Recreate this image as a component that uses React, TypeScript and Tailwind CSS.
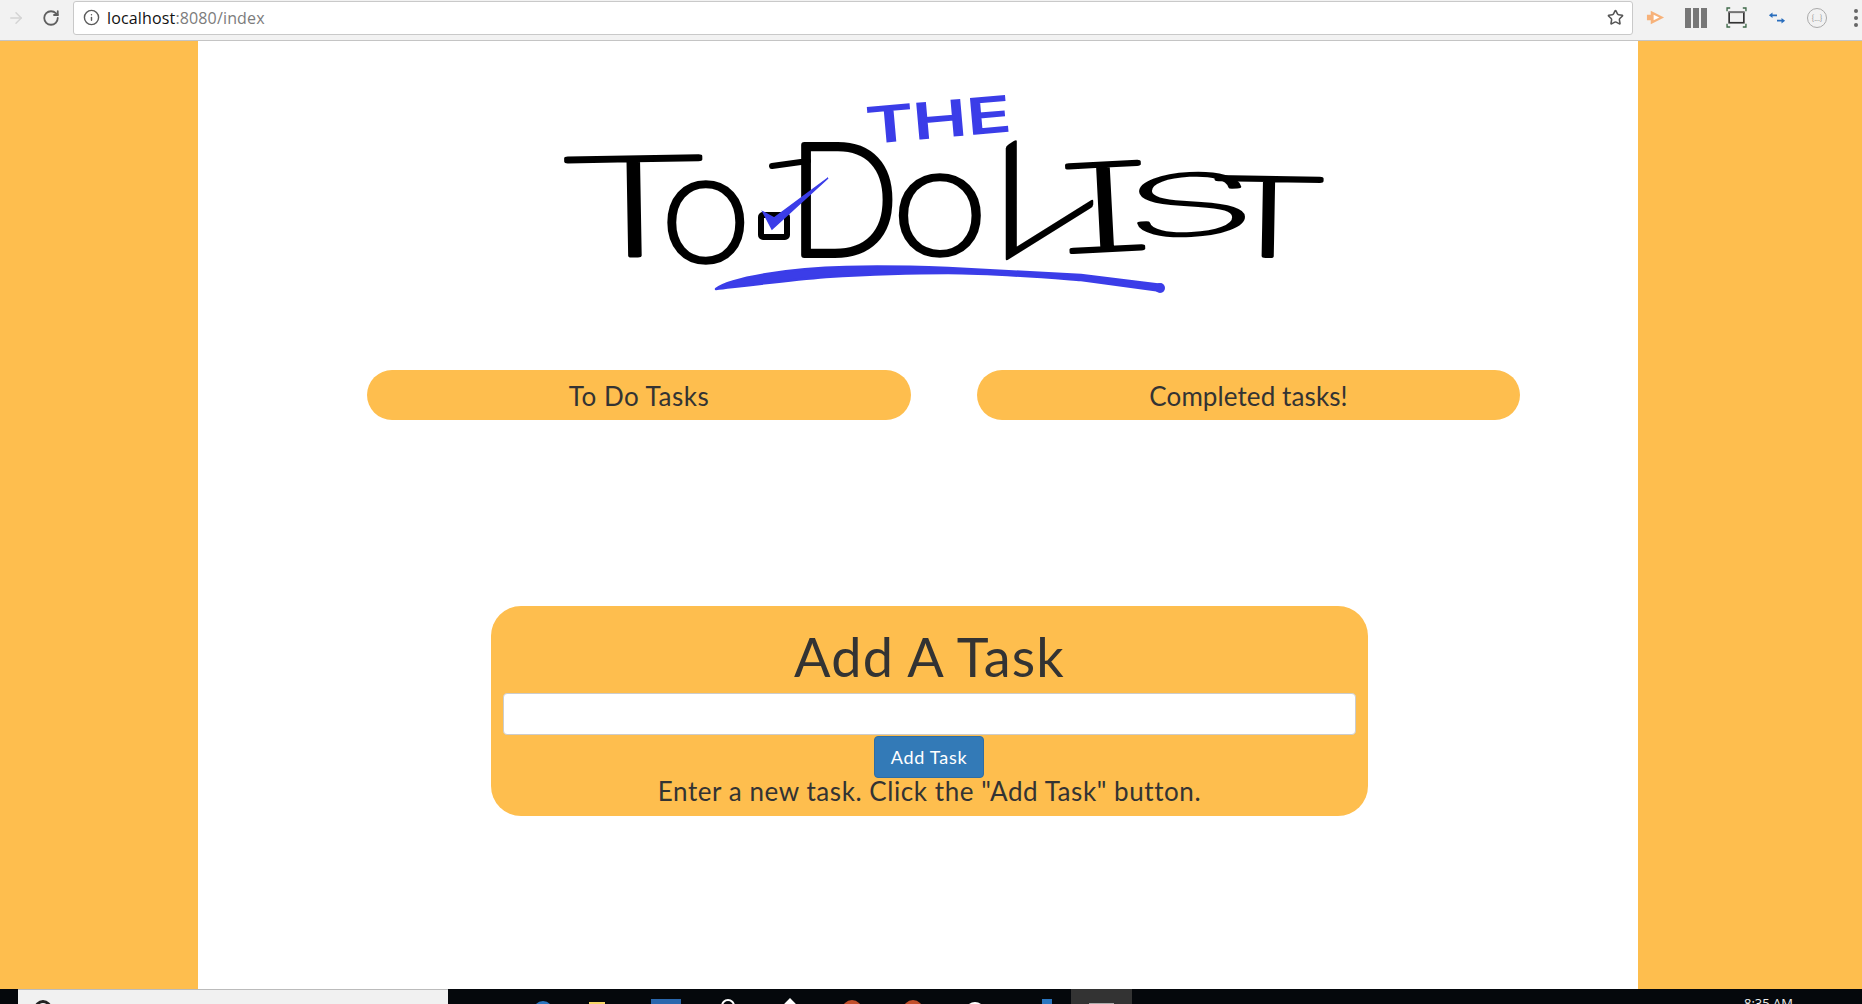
// To Do List landing page inside a browser window
import { ArrowRight, Info, RotateCw, Star } from "lucide-react";

const logoLetters = [
  { ch: "T", x: 13, y: 177, tf: "rotate(-1) scale(1.97 1)", size: 135 },
  { ch: "O", x: 122, y: 181, tf: "scale(1.02 0.92)", size: 115 },
  { ch: "D", x: 246, y: 175, tf: "scale(1.15 1.08)", size: 140 },
  { ch: "O", x: 353, y: 174, tf: "scale(1.09 0.92)", size: 115 },
  { ch: "L", x: 445, y: 192, tf: "skewY(-32) scale(1.45 1.05)", size: 145 },
  { ch: "I", x: 518, y: 173, tf: "rotate(-3) scale(2.2 1)", size: 120 },
  { ch: "S", x: 585, y: 158, tf: "rotate(-3) scale(2.3 0.87)", size: 95 },
  { ch: "T", x: 664, y: 175, tf: "rotate(1) scale(1.88 0.98)", size: 110 },
];

function Logo() {
  return (
    <svg viewBox="0 0 800 240" className="w-[800px] h-[240px] ml-[342px] block" role="img" aria-label="The To Do List">
      <g fill="#000" stroke="#000" strokeWidth="6" strokeLinejoin="round" fontFamily="Inter, sans-serif" fontWeight="100">
        {logoLetters.map((l, i) => (
          <text
            key={i}
            fontSize={l.size}
            vectorEffect="non-scaling-stroke"
            className="[font-feature-settings:'cv08']"
            transform={`translate(${l.x} ${l.y}) ${l.tf}`}
          >
            {l.ch}
          </text>
        ))}
      </g>
      <path d="M232 86 L268 81 M265 67 L266 175" fill="none" stroke="#000" strokeWidth="6" strokeLinecap="round" />
      <text
        fill="#3b3de8"
        stroke="#3b3de8"
        strokeWidth="2"
        fontFamily="Inter, sans-serif"
        fontWeight="400"
        fontSize="48"
        transform="translate(328 63) rotate(-5) scale(1.51 1)"
      >
        THE
      </text>
      <rect x="221" y="135" width="26" height="22" rx="2" fill="none" stroke="#000" strokeWidth="6" />
      <path d="M223 132 L232 149 L288 98 L234 138 Z" fill="#3b3de8" stroke="#3b3de8" strokeWidth="1.5" />
      <path
        d="M176 209 C190 198 250 188 306 187 C340 186 380 187 408 188 L541 195 L622 205 L622 211 L541 200 C500 197 450 193 408 193 C360 193 320 195 286 197 C250 200 210 205 176 209 Z"
        fill="#3b3de8"
        stroke="#3b3de8"
        strokeWidth="2.5"
        strokeLinejoin="round"
      />
      <circle cx="620" cy="208" r="5" fill="#3b3de8" />
    </svg>
  );
}

function BrowserBar() {
  return (
    <div className="h-[41px] shrink-0 bg-[#f2f2f2] border-b border-[#c4c4c4] flex items-center pb-[6px] pt-[1px]">
      <ArrowRight className="ml-[7px] w-[18px] h-[18px] text-[#d4d4d4]" strokeWidth={2} />
      <RotateCw className="ml-[17px] w-[18px] h-[18px] text-[#5f5f5f]" strokeWidth={2.4} />
      <div className="ml-[13px] w-[1560px] h-[34px] bg-white border border-[#c9c9c9] rounded-[3px] flex items-center">
        <Info className="ml-[9px] w-[17px] h-[17px] text-[#5a5a5a]" strokeWidth={2} />
        <div className="ml-[7px] text-[16px] font-['Open_Sans',sans-serif] tracking-[0.15px] text-[#111]">
          localhost<span className="text-[#7c7c7c]">:8080/index</span>
        </div>
        <Star className="ml-auto mr-[8px] w-[17px] h-[17px] text-[#555]" strokeWidth={2.2} />
      </div>
      <svg viewBox="0 0 20 20" className="ml-[13px] w-[19px] h-[19px]">
        <path d="M1 7h4V3l14 7-14 7v-4H1z" fill="#f7b27a" />
        <path d="M8 7l6 3-6 3z" fill="#fff" />
      </svg>
      <div className="ml-[20px] flex gap-[2px]">
        <div className="w-[6px] h-[20px] bg-[#777]" />
        <div className="w-[6px] h-[20px] bg-[#777]" />
        <div className="w-[6px] h-[20px] bg-[#777]" />
      </div>
      <svg viewBox="0 0 20 20" className="ml-[19px] w-[21px] h-[21px]">
        <path d="M1 4V1h3M16 1h3v3M1 16v3h3M16 19h3v-3" fill="none" stroke="#3f6a4a" strokeWidth="1.3" />
        <rect x="3" y="5" width="14" height="10" fill="none" stroke="#333" strokeWidth="1.6" />
        <path d="M3 5h14" stroke="#888" strokeWidth="1" />
      </svg>
      <svg viewBox="0 0 20 20" className="ml-[21px] w-[18px] h-[18px]">
        <path d="M1 7l4-3v2h5v2H5v2zM19 13l-4-3v2h-5v2h5v2z" fill="#2a6ebd" />
      </svg>
      <div className="ml-[21px] w-[20px] h-[20px] rounded-full border border-[#aaa] flex items-center justify-center text-[8px] leading-none text-[#999]">
        {"{...}"}
      </div>
      <div className="ml-[27px] flex flex-col gap-[3px]">
        <div className="w-[4px] h-[4px] rounded-full bg-[#666]" />
        <div className="w-[4px] h-[4px] rounded-full bg-[#666]" />
        <div className="w-[4px] h-[4px] rounded-full bg-[#666]" />
      </div>
    </div>
  );
}

function Taskbar() {
  return (
    <div className="h-[15px] shrink-0 bg-[#05080c] flex overflow-hidden">
      <div className="ml-[18px] w-[430px] h-[15px] bg-[#f1f1f1] border-t border-[#bbb] pl-[16px] pt-[10px]">
        <div className="w-[18px] h-[18px] rounded-full border-[3px] border-[#222]" />
      </div>
      <div className="ml-[85px] mt-[12px] w-[20px] h-[20px] rounded-full bg-[#2a76c0]" />
      <div className="ml-[36px] mt-[13px] w-[16px] h-[16px] bg-[#f5d565]" />
      <div className="ml-[46px] mt-[10px] w-[30px] h-[20px] bg-[#2a67ad]" />
      <div className="ml-[40px] mt-[10px] w-[14px] h-[14px] rounded-full border-2 border-white" />
      <div className="ml-[48px] mt-[12px] w-[14px] h-[14px] rotate-45 bg-white" />
      <div className="ml-[45px] mt-[11px] w-[20px] h-[20px] rounded-full bg-[#c2502c]" />
      <div className="ml-[41px] mt-[11px] w-[20px] h-[20px] rounded-full bg-[#c2502c]" />
      <div className="ml-[42px] mt-[13px] w-[20px] h-[20px] rounded-full bg-white" />
      <div className="ml-[57px] mt-[10px] w-[10px] h-[20px] bg-[#2a76c0]" />
      <div className="ml-[19px] w-[61px] bg-[#333] pl-[18px] pt-[14px]">
        <div className="w-[25px] h-[3px] bg-[#aaa]" />
      </div>
      <div className="ml-[612px] pt-[6px] text-[13px] leading-[16px] text-[#eee] font-['Open_Sans',sans-serif]">
        8:35 AM
      </div>
    </div>
  );
}

export default function App() {
  return (
    <div className="h-screen flex flex-col overflow-hidden font-['Comic_Sans_MS',Lato,sans-serif] text-[#333]">
      <BrowserBar />
      <div className="flex-1 min-h-0 bg-[#febe4e]">
        <div className="ml-[198px] w-[1440px] h-full bg-white">
          <div className="pt-[39px]">
            <Logo />
          </div>
          <div className="mt-[50px] ml-[169px] flex gap-[66px]">
            <div className="w-[544px] h-[50px] rounded-[25px] bg-[#febe4e] flex items-center justify-center text-[26px] tracking-[0.5px] pt-[2px]">
              To Do Tasks
            </div>
            <div className="w-[543px] h-[50px] rounded-[25px] bg-[#febe4e] flex items-center justify-center text-[26px] tracking-[0.1px] pt-[2px]">
              Completed tasks!
            </div>
          </div>
          <div className="mt-[186px] ml-[293px] w-[877px] h-[210px] rounded-[30px] bg-[#febe4e] flex flex-col items-center pt-[22px]">
            <div className="text-[54px] leading-[58px] tracking-[1.2px]">Add A Task</div>
            <input className="mt-[7px] w-[853px] h-[42px] bg-white border border-[#ccc] rounded-[4px]" />
            <button className="mt-px -ml-px w-[110px] h-[42px] bg-[#337ab7] border border-[#2e6da4] rounded-[4px] text-white text-[18px] tracking-[0.75px]">
              Add Task
            </button>
            <div className="text-[26px] leading-[30px] tracking-[0.57px] -mt-[2px]">
              Enter a new task. Click the "Add Task" button.
            </div>
          </div>
        </div>
      </div>
      <Taskbar />
    </div>
  );
}
